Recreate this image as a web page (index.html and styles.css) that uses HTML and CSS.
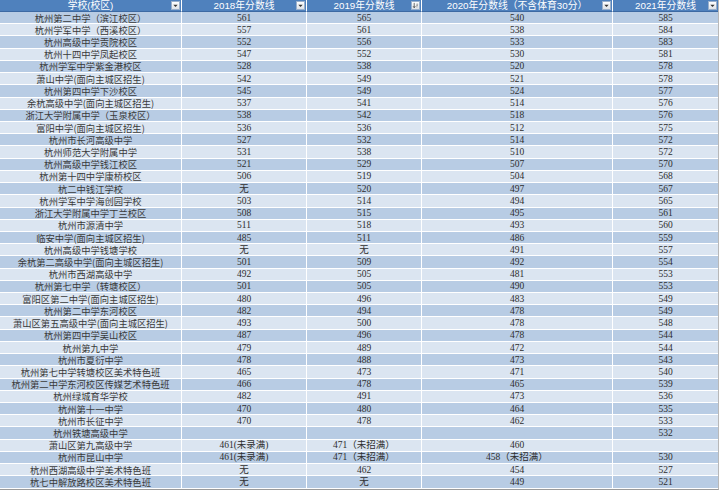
FILE: index.html
```html
<!DOCTYPE html>
<html lang="zh">
<head>
<meta charset="utf-8">
<title>杭州高中分数线</title>
<link rel="stylesheet" href="styles.css">
</head>
<body>
<div class="sheet">
  <div class="row head">
    <div class="c">学校(校区)<span class="fb"><svg viewBox="0 0 8 8"><path d="M1.5 3h5L4 5.6z" fill="#333"/></svg></span></div>
    <div class="c">2018年分数线<span class="fb"><svg viewBox="0 0 8 8"><path d="M1.5 3h5L4 5.6z" fill="#333"/></svg></span></div>
    <div class="c">2019年分数线<span class="fb"><svg viewBox="0 0 8 8"><path d="M2.5 1v5.5M1.2 4.8l1.3 1.7 1.3-1.7" stroke="#333" stroke-width="0.8" fill="none"/><path d="M5 2.5h2M5 4h1.6M5 5.5h1.2" stroke="#333" stroke-width="0.6"/></svg></span></div>
    <div class="c">2020年分数线（不含体育30分）<span class="fb"><svg viewBox="0 0 8 8"><path d="M1.5 3h5L4 5.6z" fill="#333"/></svg></span></div>
    <div class="c">2021年分数线<span class="fb"><svg viewBox="0 0 8 8"><path d="M1.5 3h5L4 5.6z" fill="#333"/></svg></span></div>
  </div>
  <div class="row"><div class="c">杭州第二中学（滨江校区）</div><div class="c">561</div><div class="c">565</div><div class="c">540</div><div class="c">585</div></div>
  <div class="row"><div class="c">杭州学军中学（西溪校区）</div><div class="c">557</div><div class="c">561</div><div class="c">538</div><div class="c">584</div></div>
  <div class="row"><div class="c">杭州高级中学贡院校区</div><div class="c">552</div><div class="c">556</div><div class="c">533</div><div class="c">583</div></div>
  <div class="row"><div class="c">杭州十四中学凤起校区</div><div class="c">547</div><div class="c">552</div><div class="c">530</div><div class="c">581</div></div>
  <div class="row"><div class="c">杭州学军中学紫金港校区</div><div class="c">528</div><div class="c">538</div><div class="c">520</div><div class="c">578</div></div>
  <div class="row"><div class="c">萧山中学(面向主城区招生)</div><div class="c">542</div><div class="c">549</div><div class="c">521</div><div class="c">578</div></div>
  <div class="row"><div class="c">杭州第四中学下沙校区</div><div class="c">545</div><div class="c">549</div><div class="c">524</div><div class="c">577</div></div>
  <div class="row"><div class="c">余杭高级中学(面向主城区招生)</div><div class="c">537</div><div class="c">541</div><div class="c">514</div><div class="c">576</div></div>
  <div class="row"><div class="c">浙江大学附属中学（玉泉校区）</div><div class="c">538</div><div class="c">542</div><div class="c">518</div><div class="c">576</div></div>
  <div class="row"><div class="c">富阳中学(面向主城区招生)</div><div class="c">536</div><div class="c">536</div><div class="c">512</div><div class="c">575</div></div>
  <div class="row"><div class="c">杭州市长河高级中学</div><div class="c">527</div><div class="c">532</div><div class="c">514</div><div class="c">572</div></div>
  <div class="row"><div class="c">杭州师范大学附属中学</div><div class="c">531</div><div class="c">538</div><div class="c">510</div><div class="c">572</div></div>
  <div class="row"><div class="c">杭州高级中学钱江校区</div><div class="c">521</div><div class="c">529</div><div class="c">507</div><div class="c">570</div></div>
  <div class="row"><div class="c">杭州第十四中学康桥校区</div><div class="c">506</div><div class="c">519</div><div class="c">504</div><div class="c">568</div></div>
  <div class="row"><div class="c">杭二中钱江学校</div><div class="c">无</div><div class="c">520</div><div class="c">497</div><div class="c">567</div></div>
  <div class="row"><div class="c">杭州学军中学海创园学校</div><div class="c">503</div><div class="c">514</div><div class="c">494</div><div class="c">565</div></div>
  <div class="row"><div class="c">浙江大学附属中学丁兰校区</div><div class="c">508</div><div class="c">515</div><div class="c">495</div><div class="c">561</div></div>
  <div class="row"><div class="c">杭州市源清中学</div><div class="c">511</div><div class="c">518</div><div class="c">493</div><div class="c">560</div></div>
  <div class="row"><div class="c">临安中学(面向主城区招生)</div><div class="c">485</div><div class="c">511</div><div class="c">486</div><div class="c">559</div></div>
  <div class="row"><div class="c">杭州高级中学钱塘学校</div><div class="c">无</div><div class="c">无</div><div class="c">491</div><div class="c">557</div></div>
  <div class="row"><div class="c">余杭第二高级中学(面向主城区招生)</div><div class="c">501</div><div class="c">509</div><div class="c">492</div><div class="c">554</div></div>
  <div class="row"><div class="c">杭州市西湖高级中学</div><div class="c">492</div><div class="c">505</div><div class="c">481</div><div class="c">553</div></div>
  <div class="row"><div class="c">杭州第七中学（转塘校区）</div><div class="c">501</div><div class="c">505</div><div class="c">490</div><div class="c">553</div></div>
  <div class="row"><div class="c">富阳区第二中学(面向主城区招生)</div><div class="c">480</div><div class="c">496</div><div class="c">483</div><div class="c">549</div></div>
  <div class="row"><div class="c">杭州第二中学东河校区</div><div class="c">482</div><div class="c">494</div><div class="c">478</div><div class="c">549</div></div>
  <div class="row"><div class="c">萧山区第五高级中学(面向主城区招生)</div><div class="c">493</div><div class="c">500</div><div class="c">478</div><div class="c">548</div></div>
  <div class="row"><div class="c">杭州第四中学吴山校区</div><div class="c">487</div><div class="c">496</div><div class="c">478</div><div class="c">544</div></div>
  <div class="row"><div class="c">杭州第九中学</div><div class="c">479</div><div class="c">489</div><div class="c">472</div><div class="c">544</div></div>
  <div class="row"><div class="c">杭州市夏衍中学</div><div class="c">478</div><div class="c">488</div><div class="c">473</div><div class="c">543</div></div>
  <div class="row"><div class="c">杭州第七中学转塘校区美术特色班</div><div class="c">465</div><div class="c">473</div><div class="c">471</div><div class="c">540</div></div>
  <div class="row"><div class="c">杭州第二中学东河校区传媒艺术特色班</div><div class="c">466</div><div class="c">478</div><div class="c">465</div><div class="c">539</div></div>
  <div class="row"><div class="c">杭州绿城育华学校</div><div class="c">482</div><div class="c">491</div><div class="c">473</div><div class="c">536</div></div>
  <div class="row"><div class="c">杭州第十一中学</div><div class="c">470</div><div class="c">480</div><div class="c">464</div><div class="c">535</div></div>
  <div class="row"><div class="c">杭州市长征中学</div><div class="c">470</div><div class="c">478</div><div class="c">462</div><div class="c">533</div></div>
  <div class="row"><div class="c">杭州铁塘高级中学</div><div class="c"></div><div class="c"></div><div class="c"></div><div class="c">532</div></div>
  <div class="row"><div class="c">萧山区第九高级中学</div><div class="c">461(未录满)</div><div class="c">471（未招满）</div><div class="c">460</div><div class="c"></div></div>
  <div class="row"><div class="c">杭州市昆山中学</div><div class="c">461(未录满)</div><div class="c">471（未招满）</div><div class="c">458（未招满）</div><div class="c">530</div></div>
  <div class="row"><div class="c">杭州西湖高级中学美术特色班</div><div class="c">无</div><div class="c">462</div><div class="c">454</div><div class="c">527</div></div>
  <div class="row"><div class="c">杭七中解放路校区美术特色班</div><div class="c">无</div><div class="c">无</div><div class="c">449</div><div class="c">521</div></div>
</div>
</body>
</html>
```

FILE: styles.css
```css
html, body {
  margin: 0;
  padding: 0;
  background: #ffffff;
}
.sheet {
  width: 718px;
  display: flex;
  flex-direction: column;
  border-bottom: 1px solid #9a9a9a;
  border-right: 1px solid #b8b8b8;
  font-family: "Liberation Serif", "Noto Sans CJK SC", serif;
  font-size: 9.5px;
  color: #2e2e2e;
}
.row {
  display: grid;
  grid-template-columns: 182px 125px 115px 191px 105px;
  height: 12.23px;
}
.row:nth-child(even) { background: #b8cce4; }
.row:nth-child(odd) { background: #dbe5f1; }
.c {
  box-sizing: border-box;
  border-right: 1px solid #ffffff;
  border-bottom: 1px solid #ffffff;
  display: flex;
  align-items: center;
  justify-content: center;
  white-space: nowrap;
  line-height: 10px;
}
.row .c:first-child {
  font-family: "Noto Sans CJK SC", sans-serif;
  font-size: 9.3px;
  color: #3a3a3a;
}
.row .c:last-child { border-right: none; }
.row.head {
  background: #4f81bd;
  height: 12px;
}
.head .c {
  position: relative;
  border-bottom: 1px solid #3d6aa3;
  color: #ffffff;
  font-family: "Liberation Sans", "Noto Sans CJK SC", sans-serif;
  font-size: 9.8px;
}
.row.head .c:first-child {
  font-family: "Liberation Sans", "Noto Sans CJK SC", sans-serif;
  font-size: 9.8px;
  color: #ffffff;
}
.fb {
  position: absolute;
  right: 1px;
  top: 1px;
  width: 9px;
  height: 9px;
  box-sizing: border-box;
  border: 1px solid #9ab0cc;
  background: linear-gradient(#ffffff, #dfe3e8);
  display: flex;
}
.fb svg {
  width: 100%;
  height: 100%;
}
```
